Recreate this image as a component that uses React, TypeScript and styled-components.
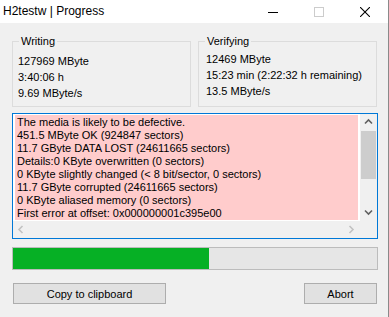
import React from "react";
import styled, { createGlobalStyle } from "styled-components";

const Global = createGlobalStyle`
  html, body { margin: 0; padding: 0; background: #f0f0f0; }
  body { font-family: "Liberation Sans", Arial, sans-serif; }
  * { box-sizing: border-box; }
`;

const Window = styled.div`
  width: 389px;
  height: 317px;
  display: flex;
  flex-direction: column;
  background: #f0f0f0;
  border-right: 1px solid #8a8a8a;
  color: #000;
  overflow: hidden;
`;

const TitleBar = styled.div`
  height: 23px;
  flex: none;
  display: flex;
  align-items: center;
  background: #fff;
`;

const Title = styled.div`
  flex: 1;
  padding-left: 3px;
  font-size: 12px;
  line-height: 23px;
`;

const CaptionButton = styled.div`
  width: 46px;
  height: 23px;
  display: flex;
  align-items: center;
  justify-content: center;
`;

const Body = styled.div`
  flex: 1;
  display: flex;
  flex-direction: column;
  padding: 12px 0 0 12px;
  width: 378px;
  font-size: 11px;
`;

const Groups = styled.div`
  display: grid;
  grid-template-columns: 179px 179px;
  column-gap: 7px;
  padding-top: 6px;
`;

const GroupBox = styled.div`
  height: 66px;
  border: 1px solid #dcdcdc;
  display: flex;
  flex-direction: column;
`;

const Legend = styled.div`
  align-self: flex-start;
  margin: -7px 0 0 6px;
  padding: 0 2px;
  background: #f0f0f0;
  line-height: 13px;
`;

const GroupLines = styled.div<{ $top: number; $left: number }>`
  margin-top: ${(p) => p.$top}px;
  padding-left: ${(p) => p.$left}px;
  line-height: 16px;
`;

const TextBox = styled.div`
  margin-top: 6px;
  width: 366px;
  height: 126px;
  border: 1px solid #0078d7;
  display: grid;
  grid-template-columns: 347px 17px;
  grid-template-rows: 107px 17px;
  background: #f0f0f0;
`;

const ContentArea = styled.div`
  background: #fff;
  padding: 1px 2px;
  display: flex;
`;

const Pink = styled.div`
  flex: 1;
  background: #ffcccc;
  padding: 1px 0 0 2px;
  line-height: 13px;
  overflow: hidden;
  white-space: nowrap;
`;

const VScroll = styled.div`
  display: flex;
  flex-direction: column;
  background: #f0f0f0;
`;

const ArrowCell = styled.div`
  width: 17px;
  height: 17px;
  flex: none;
  display: flex;
  align-items: center;
  justify-content: center;
`;

const Thumb = styled.div`
  height: 48px;
  margin: 0 1px;
  background: #cdcdcd;
`;

const Track = styled.div`
  flex: 1;
`;

const HScroll = styled.div`
  display: flex;
  justify-content: space-between;
  background: #f0f0f0;
`;

const Corner = styled.div`
  background: #f0f0f0;
`;

const Progress = styled.div`
  margin-top: 8px;
  width: 366px;
  height: 23px;
  border: 1px solid #bcbcbc;
  background: #e6e6e6;
  display: flex;
`;

const ProgressFill = styled.div<{ $value: number }>`
  width: ${(p) => p.$value}%;
  background: #06b025;
`;

const ButtonRow = styled.div`
  margin-top: 13px;
  width: 366px;
  padding: 0 1px;
  display: flex;
  justify-content: space-between;
`;

const Button = styled.div<{ $w: number }>`
  width: ${(p) => p.$w}px;
  height: 21px;
  border: 1px solid #adadad;
  background: #e1e1e1;
  display: flex;
  align-items: center;
  justify-content: center;
  font-size: 11px;
`;

const Chevron = ({ dir, color }: { dir: "up" | "down" | "left" | "right"; color: string }) => {
  const pts: Record<string, string> = {
    up: "1,5.5 4.5,2 8,5.5",
    down: "1,2.5 4.5,6 8,2.5",
    left: "5.5,1 2,4.5 5.5,8",
    right: "2.5,1 6,4.5 2.5,8",
  };
  return (
    <svg width="9" height="9" viewBox="0 0 9 9">
      <polyline points={pts[dir]} fill="none" stroke={color} strokeWidth="1.6" />
    </svg>
  );
};

const lines = [
  "The media is likely to be defective.",
  "451.5 MByte OK (924847 sectors)",
  "11.7 GByte DATA LOST (24611665 sectors)",
  "Details:0 KByte overwritten (0 sectors)",
  "0 KByte slightly changed (< 8 bit/sector, 0 sectors)",
  "11.7 GByte corrupted (24611665 sectors)",
  "0 KByte aliased memory (0 sectors)",
  "First error at offset: 0x000000001c395e00",
];

export default function App() {
  return (
    <>
      <Global />
      <Window>
        <TitleBar>
          <Title>H2testw | Progress</Title>
          <CaptionButton>
            <svg width="10" height="10" viewBox="0 0 10 10">
              <line x1="0" y1="5.5" x2="10" y2="5.5" stroke="#000" strokeWidth="1" />
            </svg>
          </CaptionButton>
          <CaptionButton>
            <svg width="10" height="10" viewBox="0 0 10 10">
              <rect x="0.5" y="0.5" width="9" height="9" fill="none" stroke="#cccccc" strokeWidth="1" />
            </svg>
          </CaptionButton>
          <CaptionButton>
            <svg width="10" height="10" viewBox="0 0 10 10">
              <path d="M0,0 L10,10 M10,0 L0,10" stroke="#000" strokeWidth="1.1" />
            </svg>
          </CaptionButton>
        </TitleBar>
        <Body>
          <Groups>
            <GroupBox>
              <Legend>Writing</Legend>
              <GroupLines $top={5} $left={5}>
                <div>127969 MByte</div>
                <div>3:40:06 h</div>
                <div>9.69 MByte/s</div>
              </GroupLines>
            </GroupBox>
            <GroupBox>
              <Legend>Verifying</Legend>
              <GroupLines $top={3} $left={7}>
                <div>12469 MByte</div>
                <div>15:23 min (2:22:32 h remaining)</div>
                <div>13.5 MByte/s</div>
              </GroupLines>
            </GroupBox>
          </Groups>
          <TextBox>
            <ContentArea>
              <Pink>
                {lines.map((l) => (
                  <div key={l}>{l}</div>
                ))}
              </Pink>
            </ContentArea>
            <VScroll>
              <ArrowCell>
                <Chevron dir="up" color="#606060" />
              </ArrowCell>
              <Thumb />
              <Track />
              <ArrowCell>
                <Chevron dir="down" color="#606060" />
              </ArrowCell>
            </VScroll>
            <HScroll>
              <ArrowCell>
                <Chevron dir="left" color="#c2c2c2" />
              </ArrowCell>
              <ArrowCell>
                <Chevron dir="right" color="#c2c2c2" />
              </ArrowCell>
            </HScroll>
            <Corner />
          </TextBox>
          <Progress>
            <ProgressFill $value={53.8} />
          </Progress>
          <ButtonRow>
            <Button $w={153}>Copy to clipboard</Button>
            <Button $w={73}>Abort</Button>
          </ButtonRow>
        </Body>
      </Window>
    </>
  );
}
